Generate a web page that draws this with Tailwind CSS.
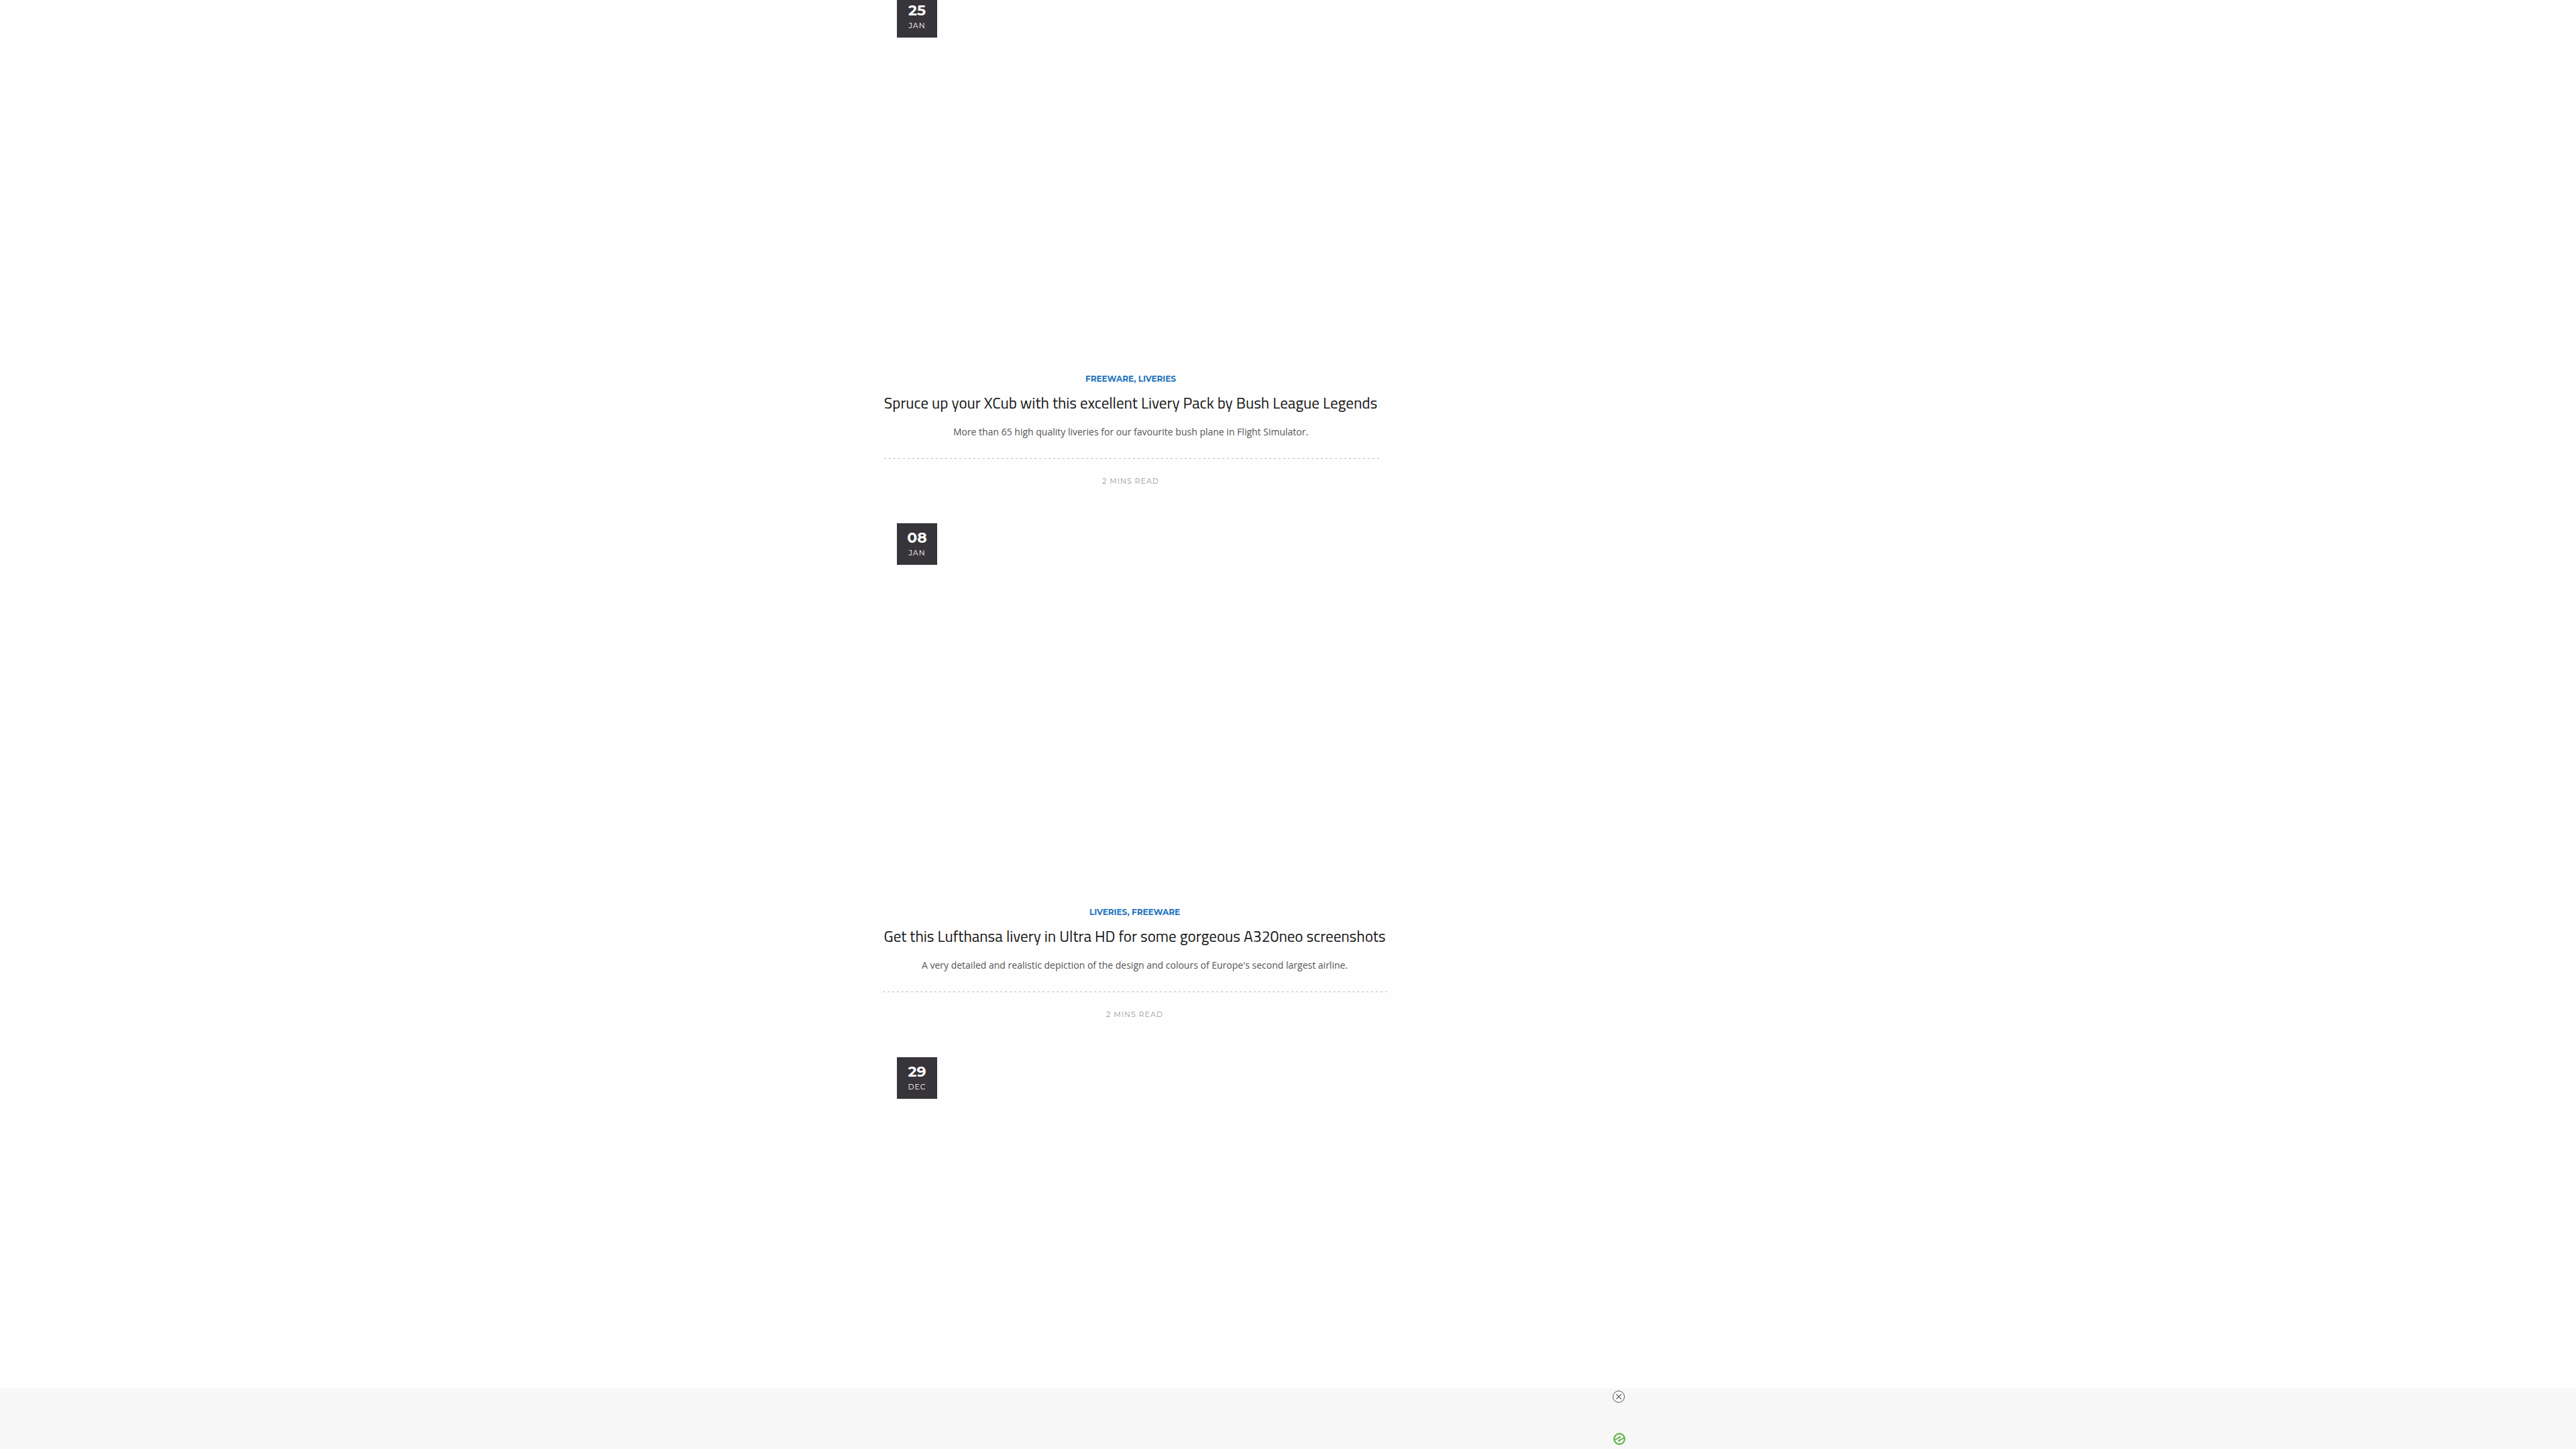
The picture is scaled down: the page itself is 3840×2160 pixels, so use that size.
<!DOCTYPE html>
<html lang="en">
<head>
<meta charset="utf-8">
<meta name="viewport" content="width=device-width, initial-scale=1">
<title>Liveries</title>
<script src="https://cdn.jsdelivr.net/npm/@tailwindcss/browser@4"></script>
</head>
<body class="bg-[#fefefe] font-['Open_Sans',sans-serif]">
<main class="mx-auto -mt-7 flex max-w-[1210px] flex-col items-start">

  <article class="w-[741px] max-w-full text-center">
    <div class="flex aspect-4/3 items-start p-[22px]">
      <time datetime="01-25" class="flex h-[62px] w-[60px] flex-col items-center justify-center bg-[#37343a] pt-0.5 font-['Montserrat','Open_Sans',sans-serif] text-white">
        <span class="text-[22px] leading-6 font-bold">25</span>
        <span class="text-[11px] leading-5 tracking-[1px]">JAN</span>
      </time>
    </div>
    <div class="flex h-[230px] flex-col">
      <p class="mt-7 font-['Montserrat','Open_Sans',sans-serif] text-xs leading-[18px] font-bold text-[#1e73be]"><a href="#freeware">FREEWARE</a>, <a href="#liveries">LIVERIES</a></p>
      <h2 class="mt-[11px] font-['Titillium_Web','Open_Sans',sans-serif] text-[23px] leading-8 whitespace-nowrap text-[#161616]"><a href="#xcub">Spruce up your XCub with this excellent Livery Pack by Bush League Legends</a></h2>
      <p class="mt-[15px] text-sm leading-6 text-[#555]">More than 65 high quality liveries for our favourite bush plane in Flight Simulator.</p>
      <div class="mt-[27px] h-px bg-[linear-gradient(to_right,transparent_4px,#b9b9b9_4px)] bg-[length:7px_1px] bg-right"></div>
      <p class="mt-6 font-['Montserrat','Open_Sans',sans-serif] text-[11px] leading-[18px] tracking-[1px] text-[#999]">2 MINS READ</p>
    </div>
  </article>

  <article class="w-[753px] max-w-full text-center">
    <div class="flex aspect-4/3 items-start p-[22px]">
      <time datetime="01-08" class="flex h-[62px] w-[60px] flex-col items-center justify-center bg-[#37343a] pt-0.5 font-['Montserrat','Open_Sans',sans-serif] text-white">
        <span class="text-[22px] leading-6 font-bold">08</span>
        <span class="text-[11px] leading-5 tracking-[1px]">JAN</span>
      </time>
    </div>
    <div class="flex h-[231px] flex-col">
      <p class="mt-7 font-['Montserrat','Open_Sans',sans-serif] text-xs leading-[18px] font-bold text-[#1e73be]"><a href="#liveries">LIVERIES</a>, <a href="#freeware">FREEWARE</a></p>
      <h2 class="mt-[11px] font-['Titillium_Web','Open_Sans',sans-serif] text-[23px] leading-8 whitespace-nowrap text-[#161616]"><a href="#lufthansa">Get this Lufthansa livery in Ultra HD for some gorgeous A320neo screenshots</a></h2>
      <p class="mt-[15px] text-sm leading-6 text-[#555]">A very detailed and realistic depiction of the design and colours of Europe's second largest airline.</p>
      <div class="mt-[27px] h-px bg-[linear-gradient(to_right,transparent_4px,#b9b9b9_4px)] bg-[length:7px_1px] bg-right"></div>
      <p class="mt-6 font-['Montserrat','Open_Sans',sans-serif] text-[11px] leading-[18px] tracking-[1px] text-[#999]">2 MINS READ</p>
    </div>
  </article>

  <article class="w-[753px] max-w-full">
    <div class="flex aspect-4/3 items-start p-[22px]">
      <time datetime="12-29" class="flex h-[62px] w-[60px] flex-col items-center justify-center bg-[#37343a] pt-0.5 font-['Montserrat','Open_Sans',sans-serif] text-white">
        <span class="text-[22px] leading-6 font-bold">29</span>
        <span class="text-[11px] leading-5 tracking-[1px]">DEC</span>
      </time>
    </div>
  </article>
</main>

<aside class="fixed inset-x-0 bottom-0 h-[90px] bg-[#f7f7f7]" aria-label="Advertisement">
  <div class="mx-auto flex h-full max-w-[1006px] flex-col items-end justify-between pt-[3px] pb-1.5">
    <button type="button" aria-label="Close">
      <svg class="block h-[18px] w-5" viewBox="0 0 20 18" fill="none" stroke="#555"><circle cx="10" cy="9" r="8.5" fill="#fafafa" stroke-width="1"/><path d="M6.4 5.4l7.2 7.2M13.6 5.4l-7.2 7.2" stroke-width="1.3"/></svg>
    </button>
    <a href="#ads" aria-label="About this ad">
      <svg class="block size-[18px]" viewBox="0 0 18 18" fill="none" stroke="#5fb346" stroke-width="2.2"><circle cx="9" cy="9" r="7.8"/><path d="M2 10.5L9.2 6.7M8.8 11.3L16 7.5" stroke-width="1.8"/><circle cx="9.3" cy="6.6" r="1.6" fill="#5fb346" stroke="none"/><circle cx="8.7" cy="11.4" r="1.6" fill="#5fb346" stroke="none"/></svg>
    </a>
  </div>
</aside>
</body>
</html>
